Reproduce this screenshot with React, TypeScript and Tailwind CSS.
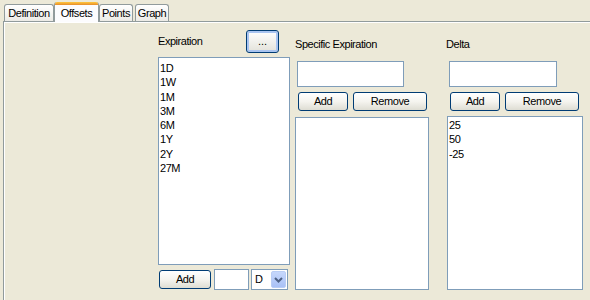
import React from 'react'

const font = { fontFamily: '"Liberation Sans", Arial, sans-serif' }

function XpButton({ label, className = '' }: { label: string; className?: string }) {
  return (
    <button
      className={`h-[19px] rounded-[3px] border border-[#003C74] bg-gradient-to-b from-[#FFFFFF] via-[#F5F4EF] to-[#DEDDD3] text-[11px] tracking-[-0.45px] text-black leading-none ${className}`}
    >
      {label}
    </button>
  )
}

function Tab({ label, w, selected = false, className = '' }: { label: string; w: string; selected?: boolean; className?: string }) {
  if (selected) {
    return (
      <div
        className={`relative z-10 -mb-px flex h-[20px] ${w} flex-col rounded-t-[3px] border-x border-[#919B9C] bg-[#FCFCFE] ${className}`}
      >
        <div className="h-[3px] rounded-t-[2px] bg-gradient-to-b from-[#FFC83C] to-[#E68B2C]" />
        <div className="flex flex-1 items-center justify-center pb-[1px] text-[11px] tracking-[-0.45px]">{label}</div>
      </div>
    )
  }
  return (
    <div
      className={`flex h-[17px] ${w} items-center justify-center rounded-t-[3px] border-x border-t border-[#919B9C] bg-gradient-to-b from-[#FFFFFF] to-[#ECEBE6] pt-[1px] text-[11px] tracking-[-0.45px] ${className}`}
    >
      {label}
    </div>
  )
}

export default function App() {
  const expirations = ['1D', '1W', '1M', '3M', '6M', '1Y', '2Y', '27M']
  const deltas = ['25', '50', '-25']

  return (
    <div style={font} className="flex h-[300px] w-[590px] flex-col overflow-hidden bg-[#ECE9D8] text-black">
      <div className="flex h-[21px] items-end pl-[4px]">
        <Tab label="Definition" w="w-[50px]" />
        <Tab label="Offsets" w="w-[45px]" selected />
        <Tab label="Points" w="w-[34px]" />
        <Tab label="Graph" w="w-[34px]" className="ml-[2px]" />
      </div>

      <div className="ml-[3px] flex flex-1 border-l border-t border-[#919B9C] pl-[154px] shadow-[inset_1px_1px_0_#FFFFFF]">
        {/* Expiration */}
        <div className="flex w-[132px] flex-col">
          <div className="mt-[8px] flex h-[23px] items-center">
            <span className="w-[88px] text-[11px] tracking-[-0.45px]">Expiration</span>
            <button className="h-[23px] w-[33px] rounded-[3px] border border-[#003C74] bg-gradient-to-b from-[#FFFFFF] to-[#E3E2DA] text-[11px] leading-none shadow-[inset_0_0_0_2px_#A9C4F0]">
              ...
            </button>
          </div>
          <div className="mt-[4px] h-[208px] border border-[#7F9DB9] bg-white pl-[1px] pt-[3px] text-[11px] leading-[14.3px] tracking-[-0.45px]">
            {expirations.map((e) => (
              <div key={e}>{e}</div>
            ))}
          </div>
          <div className="mt-[4px] flex h-[21px] items-center">
            <XpButton label="Add" className="ml-[1px] w-[52px]" />
            <div className="ml-[3px] h-[21px] w-[35px] border border-[#7F9DB9] bg-white" />
            <div className="ml-[2px] flex h-[21px] w-[37px] items-center border border-[#7F9DB9] bg-white p-[1px]">
              <span className="flex-1 pl-[2px] text-[11px]">D</span>
              <div className="flex h-[17px] w-[15px] items-center justify-center rounded-[2px] border border-[#B9CDF5] bg-gradient-to-b from-[#C6D7FC] to-[#A9C1F5]">
                <svg width="9" height="6" viewBox="0 0 9 6">
                  <path d="M1 1 L4.5 4.5 L8 1" fill="none" stroke="#4D6185" strokeWidth="2" />
                </svg>
              </div>
            </div>
          </div>
        </div>

        {/* Specific Expiration */}
        <div className="ml-[5px] flex w-[134px] flex-col">
          <div className="mt-[15px] h-[14px] text-[11px] leading-[14px] tracking-[-0.45px]">Specific Expiration</div>
          <div className="ml-[2px] mt-[10px] h-[26px] w-[107px] border border-[#7F9DB9] bg-white" />
          <div className="mt-[5px] flex">
            <XpButton label="Add" className="ml-[3px] w-[50px]" />
            <XpButton label="Remove" className="ml-[5px] w-[74px]" />
          </div>
          <div className="mt-[6px] h-[173px] border border-[#7F9DB9] bg-white" />
        </div>

        {/* Delta */}
        <div className="ml-[18px] flex w-[136px] flex-col">
          <div className="-ml-px mt-[15px] h-[14px] text-[11px] leading-[14px] tracking-[-0.45px]">Delta</div>
          <div className="ml-[2px] mt-[10px] h-[26px] w-[108px] border border-[#7F9DB9] bg-white" />
          <div className="mt-[5px] flex">
            <XpButton label="Add" className="ml-[3px] w-[50px]" />
            <XpButton label="Remove" className="ml-[5px] w-[74px]" />
          </div>
          <div className="mt-[5px] h-[174px] border border-[#7F9DB9] bg-white pl-[1px] pt-[1px] text-[11px] leading-[14.3px] tracking-[-0.45px]">
            {deltas.map((d) => (
              <div key={d}>{d}</div>
            ))}
          </div>
        </div>
      </div>
    </div>
  )
}
